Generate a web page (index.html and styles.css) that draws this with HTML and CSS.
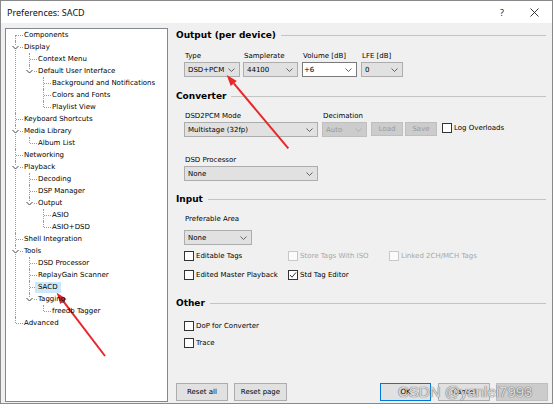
FILE: index.html
```html
<!DOCTYPE html>
<html>
<head>
<meta charset="utf-8">
<link rel="stylesheet" href="styles.css">
</head>
<body>
<div class="window">
  <div class="titlebar">
    <span class="title">Preferences: SACD</span>
    <span class="tb-btns">
      <span class="help">?</span>
      <svg class="close" width="9" height="9" viewBox="0 0 9 9"><path d="M0.5 0.5 L8.5 8.5 M8.5 0.5 L0.5 8.5" stroke="#222" stroke-width="0.9" fill="none"/></svg>
    </span>
  </div>
  <div class="content">
    <div class="treebox">
      <ul class="tree">
        <li><div class="row">Components</div></li>
        <li class="exp"><span class="tw"><svg width="7" height="5" viewBox="0 0 7 5"><polyline points="0.5,1 3.5,4 6.5,1" fill="none" stroke="#444" stroke-width="1"/></svg></span><div class="row">Display</div>
          <ul>
            <li><div class="row">Context Menu</div></li>
            <li class="exp"><span class="tw"><svg width="7" height="5" viewBox="0 0 7 5"><polyline points="0.5,1 3.5,4 6.5,1" fill="none" stroke="#444" stroke-width="1"/></svg></span><div class="row">Default User Interface</div>
              <ul>
                <li><div class="row">Background and Notifications</div></li>
                <li><div class="row">Colors and Fonts</div></li>
                <li><div class="row">Playlist View</div></li>
              </ul>
            </li>
          </ul>
        </li>
        <li><div class="row">Keyboard Shortcuts</div></li>
        <li class="exp"><span class="tw"><svg width="7" height="5" viewBox="0 0 7 5"><polyline points="0.5,1 3.5,4 6.5,1" fill="none" stroke="#444" stroke-width="1"/></svg></span><div class="row">Media Library</div>
          <ul>
            <li><div class="row">Album List</div></li>
          </ul>
        </li>
        <li><div class="row">Networking</div></li>
        <li class="exp"><span class="tw"><svg width="7" height="5" viewBox="0 0 7 5"><polyline points="0.5,1 3.5,4 6.5,1" fill="none" stroke="#444" stroke-width="1"/></svg></span><div class="row">Playback</div>
          <ul>
            <li><div class="row">Decoding</div></li>
            <li><div class="row">DSP Manager</div></li>
            <li class="exp"><span class="tw"><svg width="7" height="5" viewBox="0 0 7 5"><polyline points="0.5,1 3.5,4 6.5,1" fill="none" stroke="#444" stroke-width="1"/></svg></span><div class="row">Output</div>
              <ul>
                <li><div class="row">ASIO</div></li>
                <li><div class="row">ASIO+DSD</div></li>
              </ul>
            </li>
          </ul>
        </li>
        <li><div class="row">Shell Integration</div></li>
        <li class="exp"><span class="tw"><svg width="7" height="5" viewBox="0 0 7 5"><polyline points="0.5,1 3.5,4 6.5,1" fill="none" stroke="#444" stroke-width="1"/></svg></span><div class="row">Tools</div>
          <ul>
            <li><div class="row">DSD Processor</div></li>
            <li><div class="row">ReplayGain Scanner</div></li>
            <li><div class="row"><span class="sel">SACD</span></div></li>
            <li class="exp"><span class="tw"><svg width="7" height="5" viewBox="0 0 7 5"><polyline points="0.5,1 3.5,4 6.5,1" fill="none" stroke="#444" stroke-width="1"/></svg></span><div class="row">Tagging</div>
              <ul>
                <li><div class="row">freedb Tagger</div></li>
              </ul>
            </li>
          </ul>
        </li>
        <li><div class="row">Advanced</div></li>
      </ul>
    </div>

    <div class="panel">
      <div class="sec-head"><span>Output (per device)</span><i></i></div>
      <div class="hrow out-row">
        <div class="field w-type"><div class="lbl">Type</div><div class="combo">DSD+PCM<svg width="7" height="4" viewBox="0 0 7 4"><polyline points="0.5,0.5 3.5,3.5 6.5,0.5" fill="none" stroke="#555" stroke-width="0.9"/></svg></div></div>
        <div class="field w-rate"><div class="lbl">Samplerate</div><div class="combo">44100<svg width="7" height="4" viewBox="0 0 7 4"><polyline points="0.5,0.5 3.5,3.5 6.5,0.5" fill="none" stroke="#555" stroke-width="0.9"/></svg></div></div>
        <div class="field w-vol"><div class="lbl">Volume [dB]</div><div class="combo edit">+6<svg width="7" height="4" viewBox="0 0 7 4"><polyline points="0.5,0.5 3.5,3.5 6.5,0.5" fill="none" stroke="#555" stroke-width="0.9"/></svg></div></div>
        <div class="field w-lfe"><div class="lbl">LFE [dB]</div><div class="combo">0<svg width="7" height="4" viewBox="0 0 7 4"><polyline points="0.5,0.5 3.5,3.5 6.5,0.5" fill="none" stroke="#555" stroke-width="0.9"/></svg></div></div>
      </div>

      <div class="sec-head conv"><span>Converter</span><i></i></div>
      <div class="hrow conv-row">
        <div class="field w-mode"><div class="lbl">DSD2PCM Mode</div><div class="combo">Multistage (32fp)<svg width="7" height="4" viewBox="0 0 7 4"><polyline points="0.5,0.5 3.5,3.5 6.5,0.5" fill="none" stroke="#555" stroke-width="0.9"/></svg></div></div>
        <div class="field w-dec"><div class="lbl">Decimation</div><div class="combo dis">Auto<svg width="7" height="4" viewBox="0 0 7 4"><polyline points="0.5,0.5 3.5,3.5 6.5,0.5" fill="none" stroke="#aaa" stroke-width="0.9"/></svg></div></div>
        <div class="sbtn dis first">Load</div>
        <div class="sbtn dis">Save</div>
        <div class="check log"><span class="cb"></span><span>Log Overloads</span></div>
      </div>
      <div class="field w-mode proc"><div class="lbl">DSD Processor</div><div class="combo">None<svg width="7" height="4" viewBox="0 0 7 4"><polyline points="0.5,0.5 3.5,3.5 6.5,0.5" fill="none" stroke="#555" stroke-width="0.9"/></svg></div></div>

      <div class="sec-head inp"><span>Input</span><i></i></div>
      <div class="lbl pref-lbl">Preferable Area</div>
      <div class="combo w-pref">None<svg width="7" height="4" viewBox="0 0 7 4"><polyline points="0.5,0.5 3.5,3.5 6.5,0.5" fill="none" stroke="#555" stroke-width="0.9"/></svg></div>
      <div class="cgrid">
        <div class="check"><span class="cb"></span><span>Editable Tags</span></div>
        <div class="check disabled"><span class="cb"></span><span>Store Tags With ISO</span></div>
        <div class="check disabled"><span class="cb"></span><span>Linked 2CH/MCH Tags</span></div>
        <div class="check"><span class="cb"></span><span>Edited Master Playback</span></div>
        <div class="check"><span class="cb"><svg width="8" height="8" viewBox="0 0 8 8"><polyline points="1,4 3,6.2 7,1.5" fill="none" stroke="#222" stroke-width="0.9"/></svg></span><span>Std Tag Editor</span></div>
      </div>

      <div class="sec-head oth"><span>Other</span><i></i></div>
      <div class="check dop"><span class="cb"></span><span>DoP for Converter</span></div>
      <div class="check trace"><span class="cb"></span><span>Trace</span></div>

      <div class="btnbar">
        <div class="btn">Reset all</div>
        <div class="btn">Reset page</div>
        <div class="spacer"></div>
        <div class="btn def">OK</div>
        <div class="btn">Cancel</div>
        <div class="btn dis">Apply</div>
      </div>
    </div>
  </div>
</div>

<div class="watermark">CSDN @yanlei7993</div>

<svg class="arrows" width="554" height="409" viewBox="0 0 554 409">
  <line x1="288.3" y1="148.3" x2="233.8" y2="83.4" stroke="#e8272a" stroke-width="2"/>
  <polygon points="226.7,75 236.8,80.9 230.7,86.0" fill="#e8272a"/>
  <line x1="105" y1="356" x2="63.4" y2="301.4" stroke="#e8272a" stroke-width="2"/>
  <polygon points="56.7,292.7 66.6,299.0 60.2,303.9" fill="#e8272a"/>
</svg>
</body>
</html>
```

FILE: styles.css
```css
html, body {
  margin: 0;
  padding: 0;
  background: #ffffff;
}
body {
  position: relative;
  width: 554px;
  height: 409px;
  overflow: hidden;
  font-family: "DejaVu Sans", sans-serif;
  font-size: 7px;
  color: #000;
}
.window {
  width: 551px;
  height: 402px;
  border: 1px solid #8a8a8a;
  display: flex;
  flex-direction: column;
  background: #f0f0f0;
}
.titlebar {
  height: 22px;
  flex: none;
  background: #ffffff;
  display: flex;
  align-items: center;
  justify-content: space-between;
  padding-left: 6px;
}
.title {
  font-family: "Noto Sans", sans-serif;
  font-size: 9px;
  color: #111;
}
.tb-btns {
  display: flex;
  align-items: center;
}
.help {
  font-family: "Noto Sans", sans-serif;
  font-size: 9px;
  color: #222;
  margin-right: 26px;
}
.close {
  margin-right: 13px;
}
.content {
  flex: 1;
  display: flex;
  min-height: 0;
}

/* tree */
.treebox {
  width: 163px;
  box-sizing: border-box;
  margin: 5px 0 1px 4px;
  background: #fff;
  border: 1px solid #828790;
  overflow: hidden;
}
.tree, .tree ul {
  list-style: none;
  margin: 0;
  padding: 0;
}
.tree ul {
  margin-left: 14px;
}
.tree li {
  position: relative;
}
.tree li::before {
  content: "";
  position: absolute;
  left: 9px;
  top: 0;
  bottom: 0;
  border-left: 1px dotted #9a9a9a;
}
.tree li:last-child::before {
  bottom: auto;
  height: 6px;
}
.tree > li:first-child::before {
  top: 6px;
}
.tree li::after {
  content: "";
  position: absolute;
  left: 10px;
  top: 6px;
  width: 7px;
  border-top: 1px dotted #9a9a9a;
}
.tw {
  position: absolute;
  left: 6px;
  top: 4px;
  width: 7px;
  height: 5px;
  background: #fff;
  z-index: 1;
  display: block;
  line-height: 0;
}
.tw svg {
  display: block;
}
.row {
  height: 12px;
  line-height: 12px;
  padding-left: 18px;
  white-space: nowrap;
  position: relative;
  z-index: 2;
}
.sel {
  background: #cce8ff;
  margin-left: -3px;
  padding: 1px 3px 2px 3px;
}

/* panel */
.panel {
  flex: 1;
  margin-left: 8px;
  padding: 5px 4px 2px 0;
  display: flex;
  flex-direction: column;
  min-width: 0;
}
.sec-head {
  height: 14px;
  line-height: 14px;
  display: flex;
  align-items: center;
  font-weight: bold;
  font-size: 9px;
  margin-right: 2px;
}
.sec-head i {
  flex: 1;
  height: 1px;
  background: #c4c4c4;
  margin-left: 5px;
}
.sec-head.conv { margin-top: 12px; }
.sec-head.inp { margin-top: 11px; }
.sec-head.oth { margin-top: 15px; }

.hrow {
  display: flex;
  align-items: flex-end;
  padding-left: 8px;
}
.out-row { margin-top: 8px; }
.conv-row { margin-top: 7px; }
.field {
  display: flex;
  flex-direction: column;
}
.lbl {
  height: 12px;
  line-height: 12px;
  padding-left: 1px;
  white-space: nowrap;
}
.combo {
  height: 15px;
  box-sizing: border-box;
  border: 1px solid #adadad;
  background: #e1e1e1;
  display: flex;
  align-items: center;
  justify-content: space-between;
  padding: 0 4px 0 3px;
  white-space: nowrap;
}
.combo.edit {
  background: #fff;
  border-color: #7a7a7a;
  padding-left: 1px;
}
.combo.dis {
  background: #cccccc;
  border-color: #bfbfbf;
  color: #9a9a9a;
}
.w-type { width: 56px; }
.w-rate { width: 55px; margin-left: 3px; }
.w-vol { width: 55px; margin-left: 4px; }
.w-lfe { width: 42px; margin-left: 4px; }
.w-mode { width: 134px; }
.w-dec { width: 45px; margin-left: 4px; }
.proc {
  margin-left: 8px;
  margin-top: 17px;
}
.sbtn {
  width: 32px;
  height: 14px;
  box-sizing: border-box;
  border: 1px solid #adadad;
  background: #e1e1e1;
  display: flex;
  align-items: center;
  justify-content: center;
  margin-left: 2px;
  margin-bottom: 1px;
}
.sbtn.first { margin-left: 4px; }
.sbtn.dis {
  background: #cccccc;
  border-color: #bfbfbf;
  color: #9a9a9a;
}
.check {
  display: flex;
  align-items: center;
  height: 12px;
  white-space: nowrap;
}
.cb {
  width: 10px;
  height: 10px;
  box-sizing: border-box;
  border: 1px solid #333;
  background: #fff;
  margin-right: 2px;
  display: flex;
  align-items: center;
  justify-content: center;
  flex: none;
}
.check.disabled {
  color: #a6a6a6;
}
.check.disabled .cb {
  border-color: #c8c8c8;
  background: #fbfbfb;
}
.check.log {
  margin-left: 5px;
  margin-bottom: 3px;
}
.pref-lbl {
  margin-left: 8px;
  margin-top: 7px;
}
.w-pref {
  width: 68px;
  margin-left: 8px;
  margin-top: 5px;
}
.cgrid {
  display: grid;
  grid-template-columns: 104px 101px auto;
  row-gap: 7px;
  margin-left: 8px;
  margin-top: 5px;
}
.dop {
  margin-left: 8px;
  margin-top: 10px;
}
.trace {
  margin-left: 8px;
  margin-top: 5px;
}
.btnbar {
  margin-top: auto;
  display: flex;
  align-items: center;
}
.btn {
  width: 52px;
  height: 18px;
  box-sizing: border-box;
  border: 1px solid #adadad;
  background: #e1e1e1;
  display: flex;
  align-items: center;
  justify-content: center;
  margin-right: 6px;
  white-space: nowrap;
}
.btn:nth-child(2) { width: 53px; }
.btn.def {
  border-color: #0078d7;
  width: 51px;
  margin-right: 7px;
}
.btn.dis {
  background: #cccccc;
  border-color: #bfbfbf;
  color: #8a8a8a;
  margin-right: 0;
}
.spacer { flex: 1; }

.watermark {
  position: absolute;
  left: 398px;
  top: 383px;
  font-family: "Liberation Sans", sans-serif;
  font-size: 15px;
  line-height: 18px;
  color: rgba(250, 250, 250, 0.8);
  text-shadow: 0 0 1px #666, 0 0 1px #666;
  white-space: nowrap;
  pointer-events: none;
}
.arrows {
  position: absolute;
  left: 0;
  top: 0;
  pointer-events: none;
}
```
